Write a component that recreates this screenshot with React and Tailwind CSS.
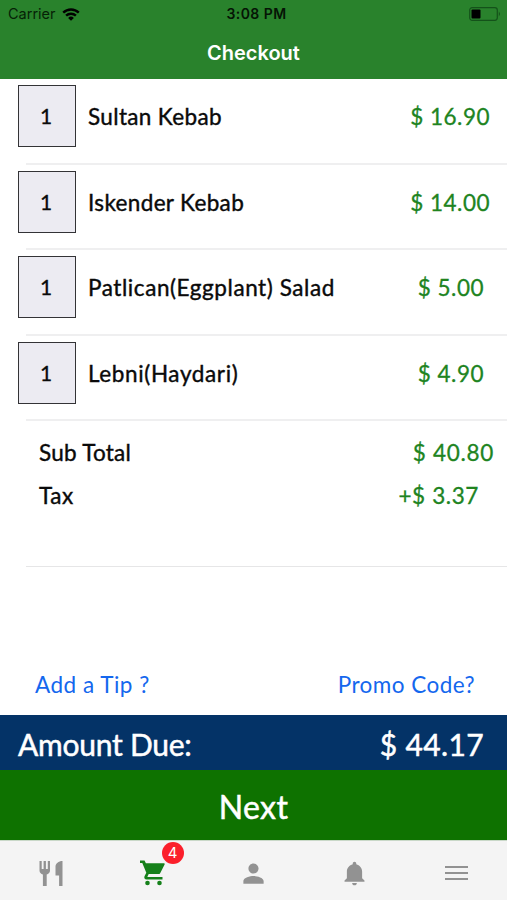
import React from 'react';
import { IoMdPerson, IoMdNotifications } from 'react-icons/io';

const items = [
  { qty: 1, name: 'Sultan Kebab', price: '$ 16.90', nameClass: 'tracking-[0.35px]', priceClass: 'mr-[17px]' },
  { qty: 1, name: 'Iskender Kebab', price: '$ 14.00', nameClass: 'tracking-[0.35px]', priceClass: 'mr-[17px]' },
  { qty: 1, name: 'Patlican(Eggplant) Salad', price: '$ 5.00', nameClass: 'tracking-[0.57px]', priceClass: 'mr-[23px]' },
  { qty: 1, name: 'Lebni(Haydari)', price: '$ 4.90', nameClass: 'tracking-[0.62px]', priceClass: 'mr-[23px]' },
];

const StatusBar = () => (
  <div className="h-7 px-2 grid grid-cols-3 items-center font-[Inter,sans-serif] text-[#062106]">
    <div className="flex items-center gap-[6px]">
      <span className="text-[14.5px] leading-none">Carrier</span>
      <svg className="w-[18px] h-[13px]" viewBox="0 0 18 13" fill="none" stroke="black" strokeWidth="2.4">
        <path d="M1.2 4.6a11.2 11.2 0 0 1 15.6 0" />
        <path d="M4.1 7.7a7 7 0 0 1 9.8 0" />
        <path d="M9 12.8 6.1 9.9a4.1 4.1 0 0 1 5.8 0z" fill="black" stroke="none" />
      </svg>
    </div>
    <span className="pl-[6px] text-center text-[14px] leading-none font-semibold tracking-[0.45px] whitespace-nowrap text-[#051405]">3:08 PM</span>
    <svg className="justify-self-end -mr-[3px] mb-[1px] w-[33px] h-[14px]" viewBox="0 0 33 14">
      <rect x=".7" y=".7" width="27.6" height="12.6" rx="2.5" fill="none" stroke="#14521a" strokeWidth="1.2" />
      <rect x="2.5" y="2.5" width="9" height="9" rx="1" fill="black" />
      <path d="M29.8 4.6q2.4 2.4 0 4.8z" fill="#14521a" />
    </svg>
  </div>
);

const ItemRow = ({ item }) => (
  <div className="h-[85.6px] flex flex-col">
    <div className="flex-1 flex items-start pt-[6px] pl-[18px]">
      <div className="w-[58px] h-[62px] pr-[2px] border-[1.5px] border-[#333336] bg-[#ecebf2] flex items-center justify-center text-[21px] [-webkit-text-stroke:0.3px]">
        {item.qty}
      </div>
      <div className="flex-1 h-[64px] pl-3 flex items-center justify-between text-[22.5px] whitespace-nowrap">
        <span className={`[-webkit-text-stroke:0.4px] ${item.nameClass}`}>{item.name}</span>
        <span className={`text-[#20841f] [-webkit-text-stroke:0.3px] tracking-[0.5px] ${item.priceClass}`}>{item.price}</span>
      </div>
    </div>
    <div className="ml-[26px] h-[2px] bg-[#efeff0]" />
  </div>
);

const Totals = () => (
  <div className="h-[146px] flex flex-col text-[22.5px]">
    <div className="flex-1 pt-[10px] pl-[39px] whitespace-nowrap">
      <div className="h-[43px] flex items-center justify-between pr-[13px]">
        <span className="[-webkit-text-stroke:0.4px] tracking-[0.25px]">Sub Total</span>
        <span className="text-[#20841f] [-webkit-text-stroke:0.3px] tracking-[0.7px]">$ 40.80</span>
      </div>
      <div className="h-[43px] flex items-center justify-between pr-[28px]">
        <span className="[-webkit-text-stroke:0.4px] tracking-[0.6px]">Tax</span>
        <span className="text-[#20841f] [-webkit-text-stroke:0.3px] tracking-[0.6px]">+$ 3.37</span>
      </div>
    </div>
    <div className="ml-[26px] h-[1.5px] bg-[#e6e6e7]" />
  </div>
);

const TabBar = () => (
  <div className="h-[60px] pt-[5px] bg-[#f4f4f4] border-t border-[#c9d8c8] grid grid-cols-5 items-center justify-items-center text-[#929292]">
    {/* Menu */}
    <svg className="w-6 h-[26px]" viewBox="0 0 24 26" fill="currentColor">
      <path d="M.5 1h2.200v8h1.900V1h2.300v8h1.900V1H11v9.500c0 2-1.500 3.500-3.300 4V26H3.900V14.500C2 14 .5 12.500 .5 10.500z" />
      <path d="M23.500 1v25h-3.400V15.500h-3.600V6.500c0-3 3-5.500 7-5.500z" />
    </svg>
    {/* Cart */}
    <div className="relative text-[#15801a]">
      <svg className="w-[25px] h-[26px]" viewBox="0 0 25 26" fill="currentColor">
        <path d="M0 .5h4.500l1.400 2.800h17.900c.8 0 1.100.7.800 1.300l-4.300 8.300c-.4.800-1.100 1.200-2 1.200H8.700l-1.200 2.300c-.2.300 0 .6.400.6h14.600v2.500H6.700c-2 0-3-2-2.100-3.600l1.700-3.200L2.300 3H0z" />
        <circle cx="7.500" cy="23" r="2.300" />
        <circle cx="19.500" cy="23" r="2.300" />
      </svg>
      <span className="absolute -top-[18px] left-[22px] w-[22px] h-[22px] rounded-full bg-[#fb1f2b] text-white text-[15px] flex items-center justify-center font-[Inter,sans-serif]">4</span>
    </div>
    {/* Profile */}
    <IoMdPerson className="w-[27px] h-[27px]" />
    {/* Notifications */}
    <IoMdNotifications className="w-[29px] h-[29px]" />
    {/* More */}
    <div className="flex flex-col gap-1">
      <div className="w-[23px] h-[2px] bg-[#929292]" />
      <div className="w-[23px] h-[2px] bg-[#929292]" />
      <div className="w-[23px] h-[2px] bg-[#929292]" />
    </div>
  </div>
);

const App = () => {
  return (
    <div className="w-full h-[900px] bg-white flex flex-col overflow-hidden font-[Lato,sans-serif] text-[#0a0a0a]">
      <header className="h-[79px] shrink-0 bg-[#29822c]">
        <StatusBar />
        <h1 className="h-[50px] flex items-center justify-center font-[Inter,sans-serif] font-semibold text-[20px] text-white">Checkout</h1>
      </header>

      {items.map((item) => (
        <ItemRow key={item.name} item={item} />
      ))}
      <Totals />

      <div className="flex-1" />

      <div className="h-[61px] pl-[35px] pr-[32px] flex items-center justify-between text-[22.5px] text-[#1467ee]">
        <button className="tracking-[0.5px]">Add a Tip ?</button>
        <button className="tracking-[0.45px]">Promo Code?</button>
      </div>
      <div className="h-[55px] pt-[3px] pl-[18px] pr-[23px] bg-[#043367] flex items-center justify-between text-[30px] text-white [-webkit-text-stroke:0.5px]">
        <span className="tracking-[-0.25px]">Amount Due:</span>
        <span className="tracking-[0.35px]">$ 44.17</span>
      </div>
      <button className="h-[70px] pt-[3px] bg-[#0e7200] text-[32px] tracking-[0.4px] text-white [-webkit-text-stroke:0.5px]">Next</button>
      <TabBar />
    </div>
  );
};

export default App;
